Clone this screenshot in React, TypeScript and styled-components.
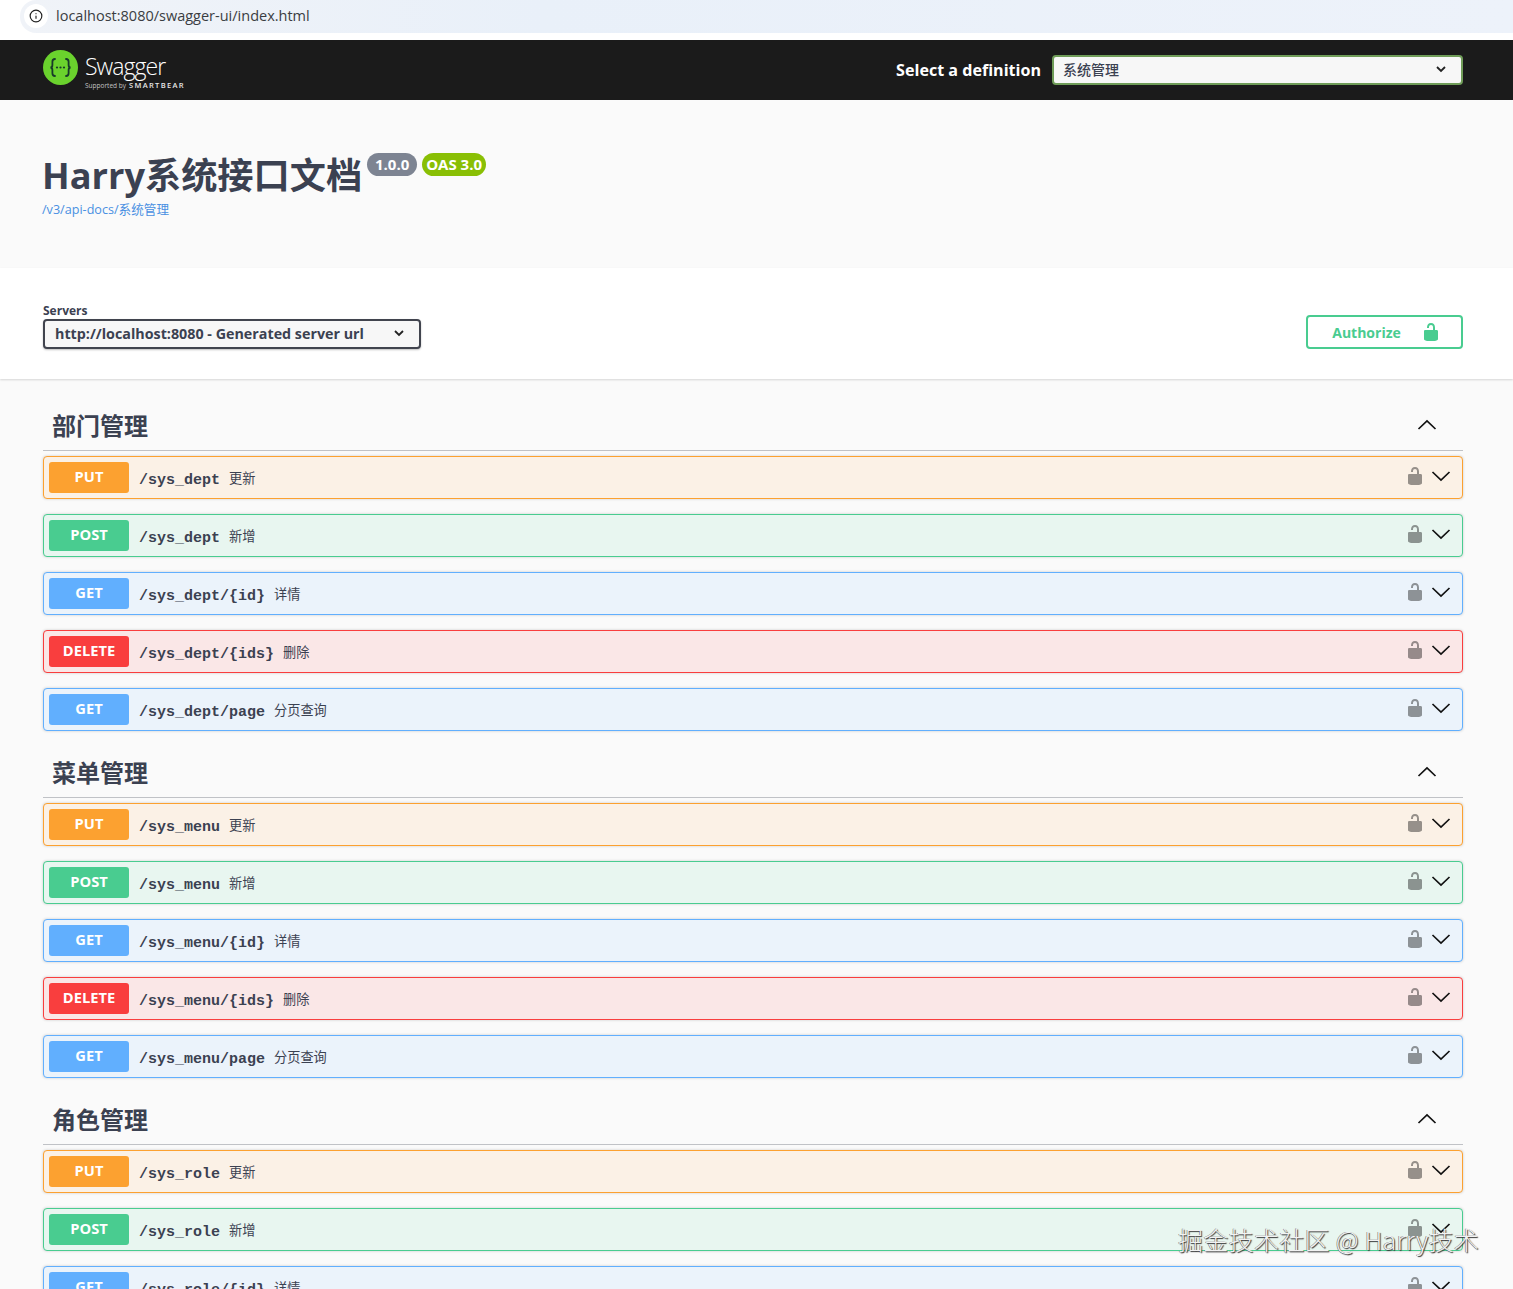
import React, { FC } from 'react';
import styled, { createGlobalStyle } from 'styled-components';
import { Info } from 'lucide-react';

const sans = `'Open Sans', 'Noto Sans CJK SC', sans-serif`;
const mono = `'Liberation Mono', 'Noto Sans CJK SC', monospace`;

const GlobalStyle = createGlobalStyle`
  html, body {
    margin: 0;
    padding: 0;
    background: #fafafa;
    overflow: hidden;
  }
  * {
    box-sizing: border-box;
  }
`;

const methodColors = {
  PUT: { main: '#fca130', bg: '#fbf1e6' },
  POST: { main: '#49cc90', bg: '#e8f6f0' },
  GET: { main: '#61affe', bg: '#ebf3fb' },
  DELETE: { main: '#f93e3e', bg: '#fae7e7' },
};

type Method = keyof typeof methodColors;

const Page = styled.div`
  position: relative;
  width: 1513px;
  height: 1289px;
  overflow: hidden;
  background: #fafafa;
  font-family: ${sans};
  color: #3b4151;
`;

const BrowserBar = styled.div`
  height: 40px;
  padding-left: 20px;
  background: #fff;
`;

const AddressField = styled.div`
  height: 33px;
  display: flex;
  align-items: center;
  gap: 8px;
  padding: 0 0 2px 4px;
  border-radius: 16px 0 0 16px;
  background: linear-gradient(90deg, #f0f3f8 0, #e9f0f9 35%, #edf2fa 100%);
  font-size: 14.5px;
  color: #3a3d42;
`;

const SiteIcon = styled.span`
  width: 24px;
  height: 24px;
  border-radius: 50%;
  background: #fff;
  display: flex;
  align-items: center;
  justify-content: center;
  color: #222;
`;

const TopBar = styled.header`
  height: 60px;
  background: #1b1b1b;
  display: flex;
  align-items: center;
  justify-content: space-between;
  padding: 0 50px 0 43px;
`;

const Logo = styled.div`
  display: flex;
  align-items: center;
  gap: 7px;
  margin-top: -5px;
`;

const LogoText = styled.div`
  display: flex;
  flex-direction: column;
  color: #fff;
  margin-top: 9px;
`;

const LogoName = styled.span`
  font-size: 23px;
  font-weight: 300;
  line-height: 25px;
  letter-spacing: -0.95px;
`;

const LogoSupport = styled.span`
  display: flex;
  align-items: baseline;
  gap: 3px;
  margin-top: 2px;
  font-size: 6.5px;
  line-height: 9px;
  color: #c4c4c4;
`;

const LogoBrand = styled.b`
  font-size: 7.5px;
  font-weight: 600;
  letter-spacing: 1.35px;
  color: #e8e8e8;
`;

const DefinitionPicker = styled.div`
  display: flex;
  align-items: center;
  gap: 11px;
`;

const DefinitionLabel = styled.label`
  font-size: 16.1px;
  font-weight: 700;
  color: #fff;
`;

const DefinitionSelect = styled.div`
  width: 411px;
  height: 30px;
  display: flex;
  align-items: center;
  justify-content: space-between;
  padding: 0 14px 2px 9px;
  border: 2px solid #6f9c58;
  border-radius: 4px;
  background: #f7f7f7;
  font-size: 14px;
  font-weight: 500;
  color: #3b4151;
`;

const InfoSection = styled.section`
  height: 168px;
  padding: 50px 50px 0 43px;
`;

const TitleRow = styled.div`
  display: flex;
  align-items: flex-start;
`;

const Title = styled.h2`
  margin: -1px 0 1px -1px;
  font-size: 36.2px;
  line-height: 52px;
  font-weight: 700;
  color: #3b4151;
`;

const Badge = styled.span<{ $color: string }>`
  height: 23px;
  margin: 3px 0 0 5px;
  padding: 0 4px 2px;
  min-width: 50px;
  display: flex;
  align-items: center;
  justify-content: center;
  border-radius: 12px;
  background: ${(p) => p.$color};
  font-size: 15px;
  font-weight: 700;
  color: #fff;
`;

const SpecLink = styled.a`
  display: block;
  margin: 0 0 0 -1px;
  font-size: 12.6px;
  line-height: 16px;
  color: #4990e2;
`;

const SchemeBar = styled.section`
  height: 111px;
  padding: 35px 50px 0 43px;
  background: #fff;
  box-shadow: 0 1px 2px 0 rgba(0, 0, 0, 0.15);
  display: flex;
  justify-content: space-between;
  align-items: flex-start;
  position: relative;
`;

const ServersLabel = styled.div`
  font-size: 12px;
  line-height: 16px;
  font-weight: 700;
`;

const ServerSelect = styled.div`
  width: 378px;
  height: 30px;
  display: flex;
  align-items: center;
  justify-content: space-between;
  padding: 0 14px 2px 10px;
  border: 2px solid #41444e;
  border-radius: 4px;
  background: #f7f7f7;
  box-shadow: 0 1px 2px 0 rgba(0, 0, 0, 0.25);
  font-size: 14.3px;
  font-weight: 700;
`;

const AuthorizeButton = styled.button`
  width: 157px;
  height: 34px;
  margin-top: 12px;
  display: flex;
  align-items: center;
  justify-content: center;
  gap: 20px;
  padding: 0 0 0 4px;
  border: 2px solid #49cc90;
  border-radius: 4px;
  background: transparent;
  font-family: ${sans};
  font-size: 14px;
  font-weight: 700;
  color: #49cc90;
`;

const Content = styled.main`
  padding: 20px 50px 0 43px;
`;

const TagHeader = styled.div`
  height: 52px;
  display: flex;
  align-items: center;
  justify-content: space-between;
  padding: 0 26px 0 9px;
  border-bottom: 1px solid rgba(59, 65, 81, 0.3);
`;

const TagTitle = styled.h3`
  margin: 2px 0 0;
  font-size: 24px;
  line-height: 32px;
  font-weight: 700;
  color: #3b4151;
`;

const TagGroup = styled.section`
  margin-bottom: 15px;
`;

const OperationList = styled.div`
  padding-top: 5px;
`;

const OperationRow = styled.div<{ $method: Method }>`
  height: 43px;
  margin-bottom: 15px;
  padding: 0 11px 0 5px;
  display: flex;
  align-items: center;
  border: 1px solid ${(p) => methodColors[p.$method].main};
  border-radius: 4px;
  background: ${(p) => methodColors[p.$method].bg};
  box-shadow: 0 0 3px rgba(0, 0, 0, 0.19);

  &:last-child {
    margin-bottom: 0;
  }
`;

const MethodBadge = styled.span<{ $method: Method }>`
  width: 80px;
  height: 31px;
  flex: none;
  display: flex;
  align-items: center;
  justify-content: center;
  padding: 0 0 3px;
  border-radius: 3px;
  background: ${(p) => methodColors[p.$method].main};
  font-size: 14.7px;
  font-weight: 700;
  color: #fff;
`;

const OperationPath = styled.span`
  margin: 6px 0 0 10px;
  font-family: ${mono};
  font-size: 15px;
  font-weight: 700;
  color: #3b4151;
`;

const OperationSummary = styled.span`
  margin: 0 0 1px 9px;
  flex: 1;
  font-size: 13.2px;
  color: #3b4151;
`;

const OperationIcons = styled.div`
  display: flex;
  align-items: center;
  gap: 6px;
  margin-top: -3px;
`;

const Watermark = styled.div`
  position: absolute;
  left: 1178px;
  top: 1222px;
  font-family: 'Noto Sans CJK SC', sans-serif;
  font-size: 25px;
  line-height: 34px;
  font-weight: 300;
  letter-spacing: 0.3px;
  white-space: nowrap;
  color: #f2f2f2;
  text-shadow: 1px 1px 1px #333, -0.5px -0.5px 0 #666;
`;

const unlockedPath =
  'M15.8 8H14V5.6C14 2.703 12.665 1 10 1 7.334 1 6 2.703 6 5.6V6h2v-.801C8 3.754 8.797 3 10 3c1.203 0 2 .754 2 2.199V8H4c-.553 0-1 .646-1 1.199V17c0 .549.428 1.139.951 1.307l1.197.387C5.672 18.861 6.55 19 7.1 19h5.8c.549 0 1.428-.139 1.951-.307l1.196-.387c.524-.167.953-.757.953-1.306V9.199C17 8.646 16.352 8 15.8 8z';

const LockIcon: FC<{ color: string }> = ({ color }) => (
  <svg width="20" height="20" viewBox="0 0 20 20" fill={color}>
    <path d={unlockedPath} />
  </svg>
);

const Chevron: FC<{ up?: boolean; size?: number }> = ({ up, size = 20 }) => (
  <svg width={size} height={size} viewBox="0 0 20 20" fill="none" stroke="#111" strokeWidth="1.7">
    <path d={up ? 'M1.5 14 10 6l8.5 8' : 'M1.5 6 10 14l8.5-8'} />
  </svg>
);

const SmallCaret: FC = () => (
  <svg width="12" height="12" viewBox="0 0 12 12" fill="none" stroke="#222" strokeWidth="1.8">
    <path d="M2 4l4 4 4-4" />
  </svg>
);

const SwaggerMark: FC = () => (
  <svg width="35" height="35" viewBox="0 0 35 35" fill="none">
    <circle cx="17.5" cy="17.5" r="17.5" fill="#6ad22d" />
    <g stroke="#173a2a" strokeWidth="1.8" strokeLinecap="round">
      <path d="M12 9c-2.200 0-2.600 1-2.600 2.700v3.200c0 1.500-.6 2.600-2 2.600 1.400 0 2 1.100 2 2.600v3.200c0 1.700.4 2.700 2.600 2.700" />
      <path d="M23 9c2.200 0 2.600 1 2.600 2.700v3.200c0 1.500.6 2.600 2 2.600-1.400 0-2 1.100-2 2.600v3.200c0 1.700-.4 2.700-2.600 2.700" />
    </g>
    <g fill="#173a2a">
      <circle cx="14" cy="17.500" r="1.100" />
      <circle cx="17.500" cy="17.500" r="1.100" />
      <circle cx="21" cy="17.500" r="1.100" />
    </g>
  </svg>
);

const operations = (base: string) =>
  [
    { method: 'PUT', path: `/${base}`, summary: '更新' },
    { method: 'POST', path: `/${base}`, summary: '新增' },
    { method: 'GET', path: `/${base}/{id}`, summary: '详情' },
    { method: 'DELETE', path: `/${base}/{ids}`, summary: '删除' },
    { method: 'GET', path: `/${base}/page`, summary: '分页查询' },
  ] as { method: Method; path: string; summary: string }[];

const tags = [
  { name: '部门管理', base: 'sys_dept' },
  { name: '菜单管理', base: 'sys_menu' },
  { name: '角色管理', base: 'sys_role' },
];

export default function App() {
  return (
    <Page>
      <GlobalStyle />
      <BrowserBar>
        <AddressField>
          <SiteIcon>
            <Info size={14} strokeWidth={2} />
          </SiteIcon>
          localhost:8080/swagger-ui/index.html
        </AddressField>
      </BrowserBar>

      <TopBar>
        <Logo>
          <SwaggerMark />
          <LogoText>
            <LogoName>Swagger</LogoName>
            <LogoSupport>
              Supported by <LogoBrand>SMARTBEAR</LogoBrand>
            </LogoSupport>
          </LogoText>
        </Logo>
        <DefinitionPicker>
          <DefinitionLabel>Select a definition</DefinitionLabel>
          <DefinitionSelect>
            系统管理
            <SmallCaret />
          </DefinitionSelect>
        </DefinitionPicker>
      </TopBar>

      <InfoSection>
        <TitleRow>
          <Title>Harry系统接口文档</Title>
          <Badge $color="#7d8492">1.0.0</Badge>
          <Badge $color="#89bf04">OAS 3.0</Badge>
        </TitleRow>
        <SpecLink>/v3/api-docs/系统管理</SpecLink>
      </InfoSection>

      <SchemeBar>
        <div>
          <ServersLabel>Servers</ServersLabel>
          <ServerSelect>
            http://localhost:8080 - Generated server url
            <SmallCaret />
          </ServerSelect>
        </div>
        <AuthorizeButton>
          Authorize
          <LockIcon color="#49cc90" />
        </AuthorizeButton>
      </SchemeBar>

      <Content>
        {tags.map((tag) => (
          <TagGroup key={tag.name}>
            <TagHeader>
              <TagTitle>{tag.name}</TagTitle>
              <Chevron up />
            </TagHeader>
            <OperationList>
              {operations(tag.base).map((op) => (
                <OperationRow key={op.method + op.path} $method={op.method}>
                  <MethodBadge $method={op.method}>{op.method}</MethodBadge>
                  <OperationPath>{op.path}</OperationPath>
                  <OperationSummary>{op.summary}</OperationSummary>
                  <OperationIcons>
                    <LockIcon color="rgba(0, 0, 0, 0.4)" />
                    <Chevron />
                  </OperationIcons>
                </OperationRow>
              ))}
            </OperationList>
          </TagGroup>
        ))}
      </Content>

      <Watermark>掘金技术社区 @ Harry技术</Watermark>
    </Page>
  );
}
